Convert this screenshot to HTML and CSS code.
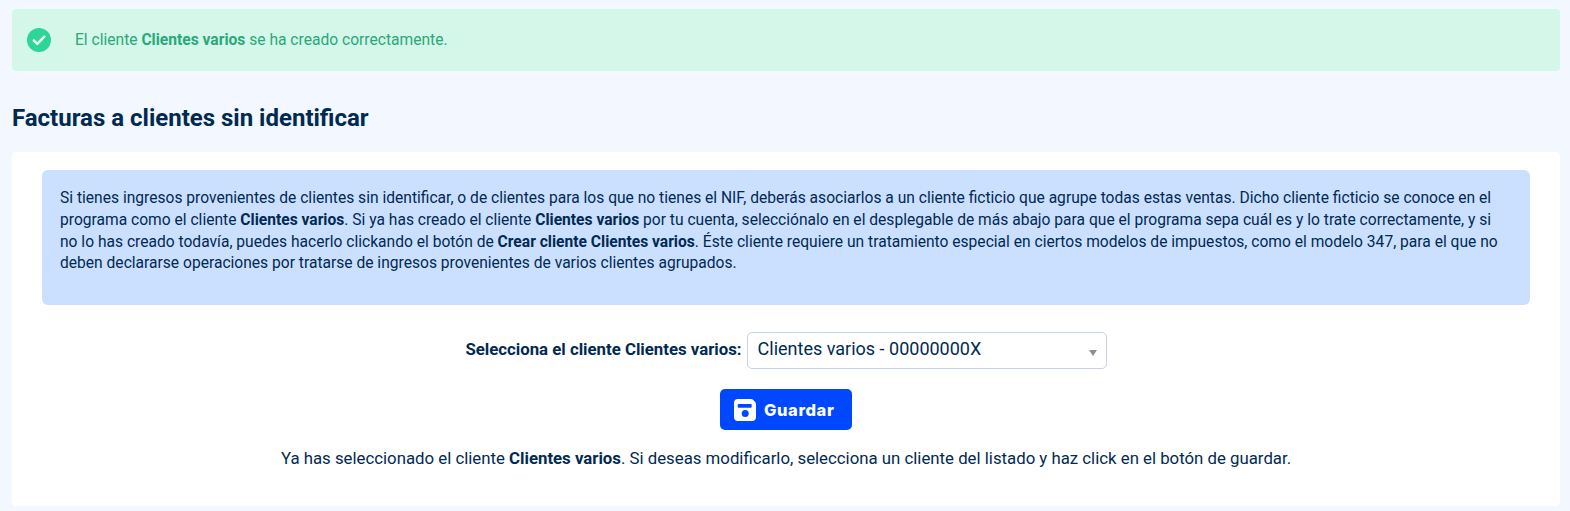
FILE: index.html
```html
<!DOCTYPE html>
<html lang="es">
<head>
<meta charset="utf-8">
<title>Facturas a clientes sin identificar</title>
<link rel="stylesheet" href="styles.css">
</head>
<body>
<main class="page">
  <div class="alert">
    <svg class="alert-icon" viewBox="0 0 24 24" width="24" height="24" aria-hidden="true"><circle cx="12" cy="12" r="12" fill="#2ed598"/><path d="M6.800 12.400l3.500 3.500 7-7.200" fill="none" stroke="#f2fff9" stroke-width="2.400" stroke-linecap="round" stroke-linejoin="round"/></svg>
    <p class="alert-text">El cliente <strong>Clientes varios</strong> se ha creado correctamente.</p>
  </div>
  <h1 class="title">Facturas a clientes sin identificar</h1>
  <section class="panel">
    <div class="info">Si tienes ingresos provenientes de clientes sin identificar, o de clientes para los que no tienes el NIF, deberás asociarlos a un cliente ficticio que agrupe todas estas ventas. Dicho cliente ficticio se conoce en el programa como el cliente <strong>Clientes varios</strong>. Si ya has creado el cliente <strong>Clientes varios</strong> por tu cuenta, selecciónalo en el desplegable de más abajo para que el programa sepa cuál es y lo trate correctamente, y si no lo has creado todavía, puedes hacerlo clickando el botón de <strong>Crear cliente Clientes varios</strong>. Éste cliente requiere un tratamiento especial en ciertos modelos de impuestos, como el modelo 347, para el que no deben declararse operaciones por tratarse de ingresos provenientes de varios clientes agrupados.</div>
    <div class="field">
      <span class="field-label">Selecciona el cliente Clientes varios:</span>
      <div class="select"><span class="select-value">Clientes varios - 00000000X</span><span class="select-arrow"></span></div>
    </div>
    <div class="actions">
      <button class="save" type="button">
        <svg class="save-icon" viewBox="0 0 22 22" width="22" height="22" aria-hidden="true"><path fill-rule="evenodd" fill="#fff" d="M3.500 0H17c.8 0 1.500.3 2 .8l2.200 2.200c.5.5.8 1.200.8 2V18.500c0 1.900-1.600 3.500-3.500 3.500h-15C1.600 22 0 20.400 0 18.500v-15C0 1.600 1.600 0 3.500 0zM4.500 5a.8.8 0 0 0-.8.8v2.200c0 .4.400.8.8.8h12.400c.4 0 .8-.4.800-.8V5.800a.8.8 0 0 0-.8-.8zM11.200 18a3.500 3.500 0 1 0 0-7 3.500 3.500 0 0 0 0 7z"/></svg>
        <span>Guardar</span>
      </button>
    </div>
    <p class="note">Ya has seleccionado el cliente <strong>Clientes varios</strong>. Si deseas modificarlo, selecciona un cliente del listado y haz click en el botón de guardar.</p>
  </section>
</main>
</body>
</html>
```
FILE: styles.css
```css
* { box-sizing: border-box; }
html, body { margin: 0; padding: 0; }
body {
  background: #f3f7ff;
  color: #012a52;
  font-family: Roboto, "Liberation Sans", sans-serif;
  font-size: 15.600px;
  line-height: 21.800px;
  overflow: hidden;
}
.page { padding: 9px 10px 0 12px; }
.alert {
  display: flex;
  align-items: center;
  height: 62px;
  padding-left: 15px;
  background: #d4f7e9;
  border-radius: 4px;
  color: #29a97a;
}
.alert-icon { flex: none; }
.alert-text { margin: 2px 0 0 24px; font-size: 15.600px; }
.alert-text strong { font-weight: 700; }
.title {
  margin: 33px 0 20px;
  font-size: 24px;
  line-height: 28px;
  font-weight: 700;
  color: #012a52;
}
.panel {
  background: #fff;
  border-radius: 4px;
  height: 354px;
  padding: 18px 30px 0;
}
.info {
  height: 135px;
  padding: 18px 18px 0;
  background: #cbdfff;
  border-radius: 6px;
}
.info strong, .note strong { font-weight: 700; }
.field {
  display: flex;
  justify-content: center;
  align-items: center;
  gap: 5px;
  margin-top: 27px;
  font-size: 16.800px;
}
.field-label { margin-bottom: 1px; font-weight: 700; }
.select {
  display: flex;
  align-items: center;
  justify-content: space-between;
  width: 360px;
  height: 37px;
  padding: 0 9px 4px 10px;
  border: 1px solid #c8d3e2;
  border-radius: 5px;
  background: #fff;
  font-size: 18px;
}
.select-arrow {
  width: 0;
  height: 0;
  margin-top: 9px;
  border-left: 4px solid transparent;
  border-right: 4px solid transparent;
  border-top: 6px solid #8a8f98;
}
.actions { display: flex; justify-content: center; margin-top: 20px; }
.save {
  display: flex;
  align-items: center;
  gap: 8px;
  width: 132px;
  height: 41px;
  padding: 0 0 0 14px;
  border: 0;
  border-radius: 5px;
  background: #0048ff;
  color: #fff;
  font-family: Inter, sans-serif;
  font-size: 16.500px;
  font-weight: 800;
  letter-spacing: .6px;
}
.note { margin: 18px 0 0; text-align: center; font-size: 16.800px; }
```
